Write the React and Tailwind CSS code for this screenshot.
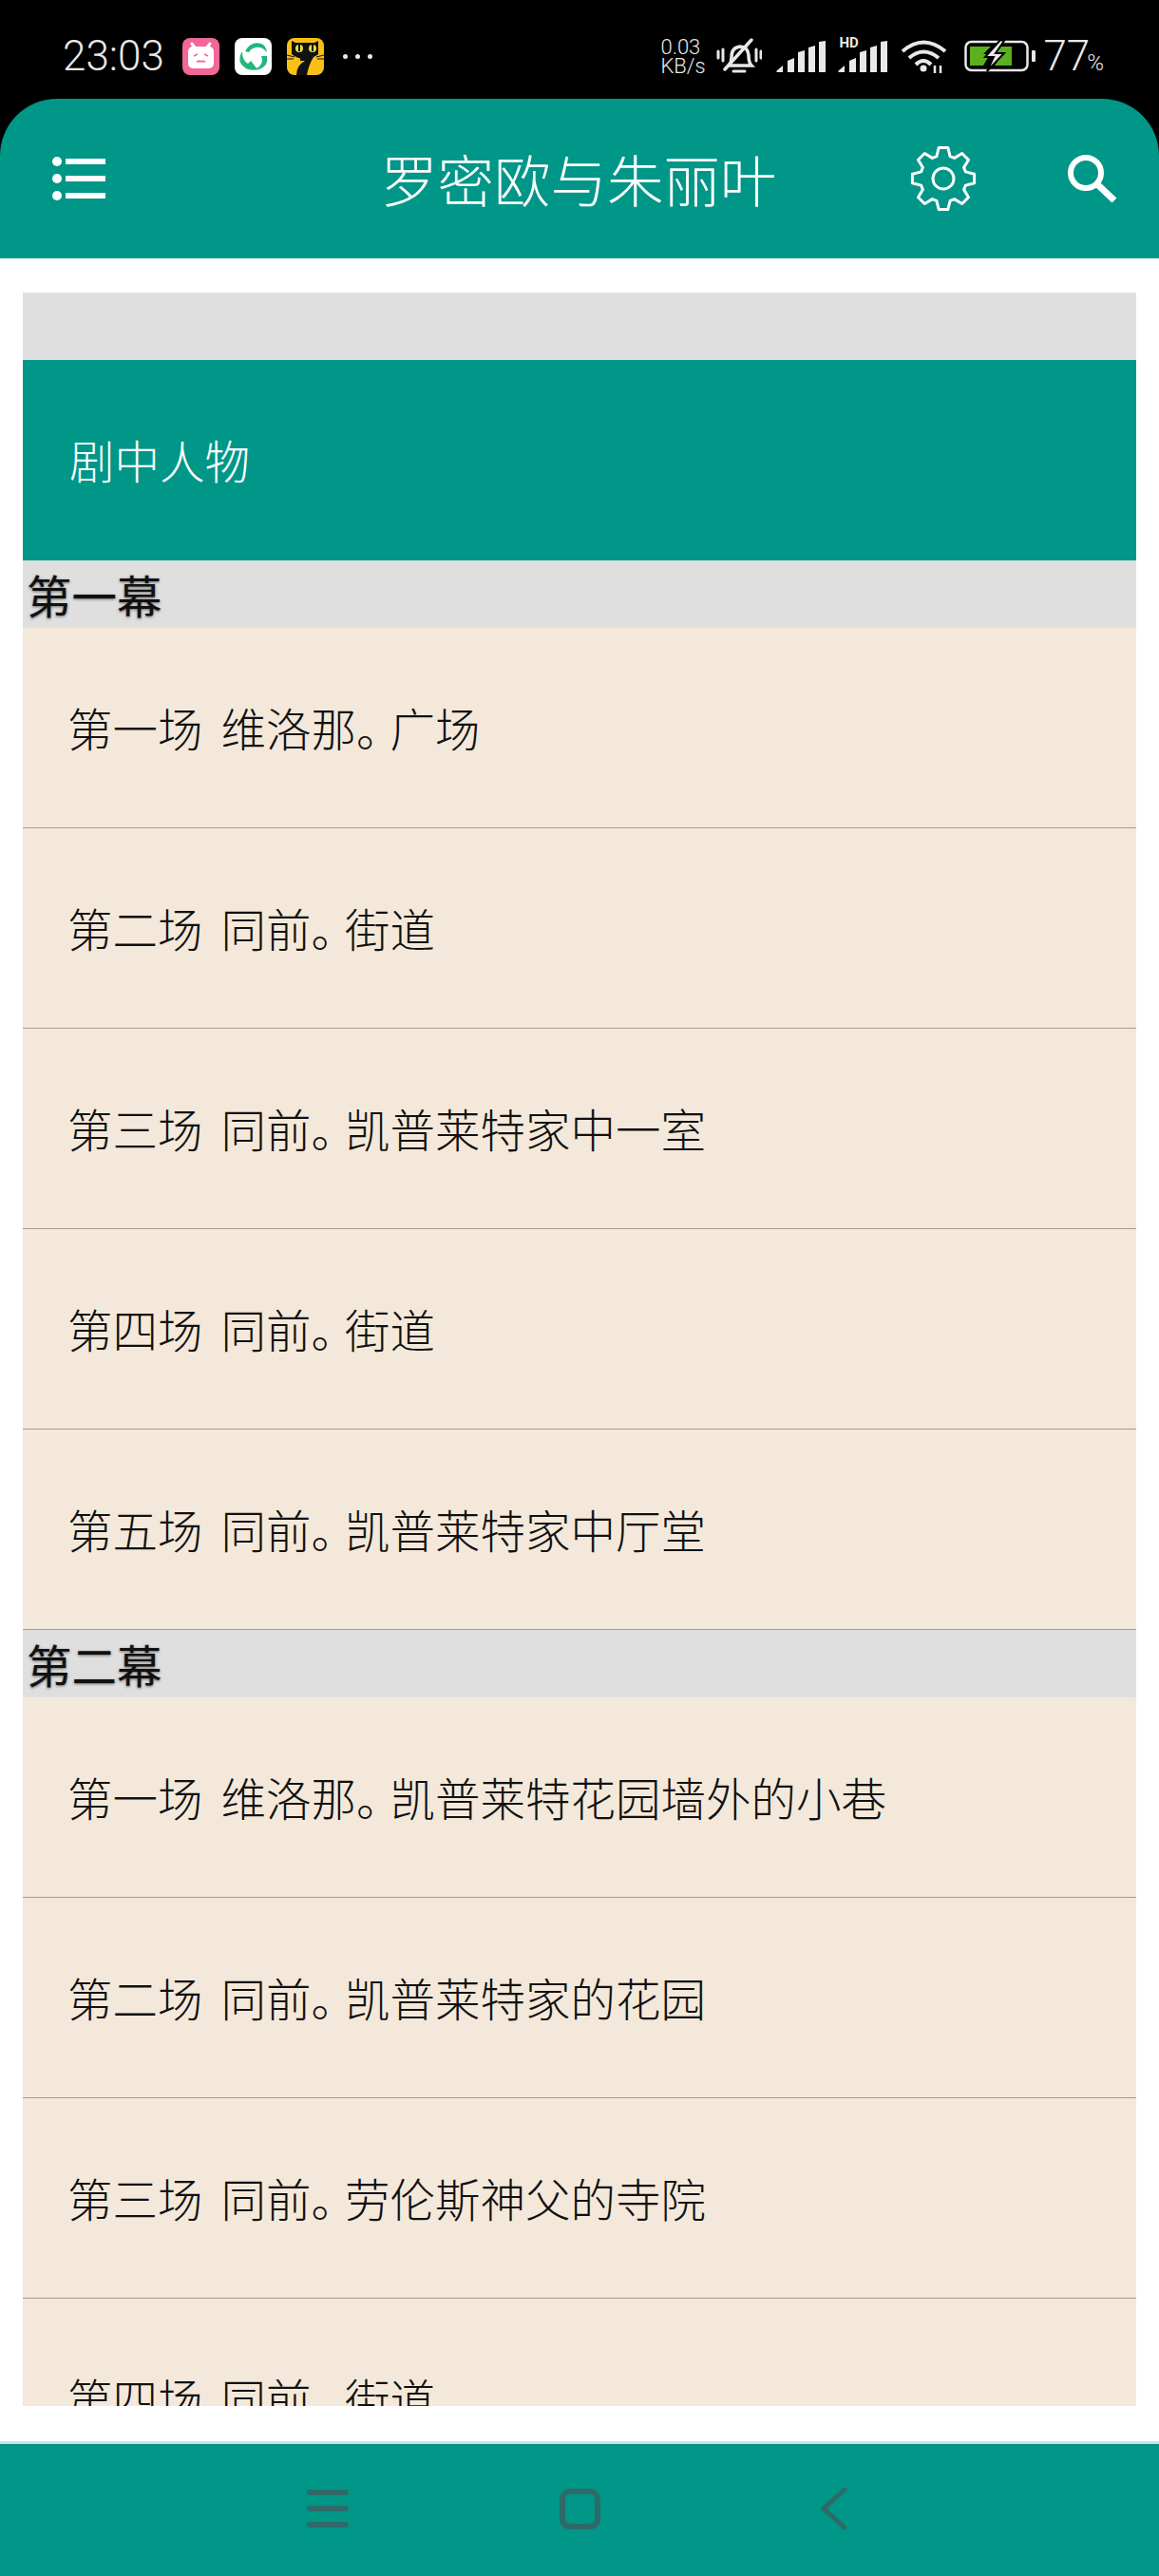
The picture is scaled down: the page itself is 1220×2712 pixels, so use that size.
import React from "react";

const CJK = "font-['Noto_Sans_CJK_SC','Noto_Sans_CJK_JP',sans-serif]";

function gearPath() {
  const cx = 35, cy = 35, ro = 33, ri = 24.5, n = 8;
  const pts = [];
  for (let i = 0; i < n; i++) {
    const a = (i * 2 * Math.PI) / n - Math.PI / 2;
    const w = (2 * Math.PI) / n;
    [[-0.48, ri], [-0.24, ro], [0.24, ro], [0.48, ri]].forEach(([k, r]) => {
      const t = a + k * w * 0.78;
      pts.push(`${(cx + r * Math.cos(t)).toFixed(1)} ${(cy + r * Math.sin(t)).toFixed(1)}`);
    });
  }
  return "M" + pts.join("L") + "Z";
}

const Bili = () => (
  <svg width="39" height="39" viewBox="0 0 39 39">
    <rect width="39" height="39" rx="8" fill="#f0679a" />
    <path d="M13 10l-3-4M26 10l3-4" stroke="#fff" strokeWidth="3" strokeLinecap="round" />
    <rect x="6" y="9" width="27" height="23" rx="5" fill="#fff" />
    <path d="M12 19l4-2M27 19l-4-2M15 24q1.500 2 3 0q1.500 2 3 0q1.500 2 3 0" stroke="#f0679a" strokeWidth="1.500" fill="none" />
  </svg>
);
const Swirl = () => (
  <svg width="39" height="39" viewBox="0 0 39 39">
    <rect width="39" height="39" rx="8" fill="#fff" />
    <path d="M11 14Q17 3 28 6q5 2 6 9q-5-6-12-5q-5 1-7 5z" fill="#1fb87c" />
    <path d="M34 19q2 10-8 14q-4 1-6 0q8-2 9-9q0-3-1-5z" fill="#1fb87c" />
    <path d="M24 33q-12 3-18-7q-2-6 2-12q0 10 6 13l3-3z" fill="#1fb87c" />
  </svg>
);
const Cat = () => (
  <svg width="39" height="39" viewBox="0 0 39 39">
    <rect width="39" height="39" rx="8" fill="#f8bf16" />
    <path d="M5 3l4 2h20l4-2v14q-6 5-14 5T5 17z" fill="#111" />
    <circle cx="13" cy="11" r="4" fill="#e6e04c" />
    <circle cx="27" cy="11" r="4" fill="#e6e04c" />
    <rect x="12" y="7" width="2" height="7" fill="#111" />
    <rect x="26" y="7" width="2" height="7" fill="#111" />
    <path d="M14 20h14q-5 8-7 19H10q0-10 9-15h-5z" fill="#111" />
    <path d="M0 18l8 2M39 18l-8 2M0 22l7 0M39 22l-7 0" stroke="#111" strokeWidth="1" />
  </svg>
);
const Bell = () => (
  <svg width="48" height="40" viewBox="0 0 48 40" fill="none" stroke="#e8e8e8">
    <path d="M13 30q3-3 3-9q0-10 9-11q8 0 9 9q0 8 3 11z" strokeWidth="3.500" />
    <path d="M18 36h12" strokeWidth="3" strokeLinecap="round" />
    <path d="M9 34L37 3" strokeWidth="3.500" strokeLinecap="round" />
    <path d="M7 13v12M2 15v7M42 13v12M47 15v7" strokeWidth="3" strokeLinecap="round" />
  </svg>
);
const Signal = () => (
  <svg width="52" height="34" viewBox="0 0 52 34" fill="#e8e8e8">
    <path d="M0 32l7-6v7H1zM12 21l7-3v15h-7zM23 12l7-2v23h-7zM34 7l7-2v28h-7zM45 1l7-1v33h-7z" />
  </svg>
);
const Wifi = () => (
  <svg width="50" height="37" viewBox="0 0 50 37" fill="none" stroke="#e8e8e8" strokeWidth="4">
    <path d="M2 13Q24-6 47 13" />
    <path d="M9 20Q24 7 40 20" />
    <path d="M16 27Q24 19 32 27" />
    <circle cx="24" cy="31" r="3.500" fill="#e8e8e8" stroke="none" />
    <path d="M36 36v-8M42 36v-8" strokeWidth="2.500" />
  </svg>
);
const Battery = () => (
  <svg width="75" height="34" viewBox="0 0 75 34" fill="none">
    <rect x="1.500" y="2" width="65" height="30" rx="6" stroke="#e8e8e8" strokeWidth="2.500" />
    <rect x="71" y="11" width="4" height="12" rx="1" fill="#e8e8e8" />
    <path d="M6 7h22l-8 8h7L20 27H6zM37 7h13v20H32l6-9h-6z" fill="#59b11f" />
    <path d="M38 0L22 18h9l-7 15 18-19h-9l9-13z" fill="#e8e8e8" stroke="#000" strokeWidth="2" />
  </svg>
);

const Menu = () => (
  <svg width="56" height="47" viewBox="0 0 56 47" fill="#fff">
    <circle cx="5" cy="5" r="5" /><rect x="14" y="2" width="42" height="6" />
    <circle cx="5" cy="23" r="5" /><rect x="14" y="20" width="42" height="6" />
    <circle cx="5" cy="41" r="5" /><rect x="14" y="38" width="42" height="6" />
  </svg>
);
const Gear = () => (
  <svg width="70" height="70" viewBox="0 0 70 70" fill="none" stroke="#fff" strokeWidth="3">
    <path d={gearPath()} strokeLinejoin="round" />
    <circle cx="35" cy="35" r="11" />
  </svg>
);
const Search = () => (
  <svg width="54" height="54" viewBox="0 0 54 54" fill="none" stroke="#fff">
    <circle cx="21" cy="21" r="16" strokeWidth="6" />
    <path d="M33 33l18 17" strokeWidth="7" />
  </svg>
);

const Stop = () => <span className="tracking-[-12px]">。</span>;

const Item = ({ no, head, tail }) => (
  <div className="h-[211px] shrink-0 flex items-center pl-[47px] pb-[1px] border-b border-[#a89c8e] text-[47.500px] font-extralight text-[#111] whitespace-pre">
    <span>{no}</span>
    <span className="ml-[19px]">{head}</span>
    <Stop />
    <span>{tail}</span>
  </div>
);
const Act = ({ children }) => (
  <div className="h-[71px] shrink-0 bg-[#dfdfdf] flex items-center pl-[4px] text-[47.500px] leading-none font-normal text-[#111] [text-shadow:0_1px_3px_rgba(0,0,0,0.55)]">
    {children}
  </div>
);

export default function App() {
  return (
    <div className={`w-[1220px] h-[2712px] bg-black overflow-hidden flex flex-col ${CJK}`}>
      <div className="h-[104px] shrink-0 flex items-center pl-[66px] pr-[58px] pt-[14px] font-['Roboto',sans-serif] text-[#e8e8e8]">
        <span className="text-[44px] font-light w-[126px]">23:03</span>
        <div className="flex gap-[16px]"><Bili /><Swirl /><Cat /></div>
        <div className="flex gap-[8px] ml-[20px]">
          <i className="w-[5px] h-[5px] rounded-full bg-[#e8e8e8]" />
          <i className="w-[5px] h-[5px] rounded-full bg-[#e8e8e8]" />
          <i className="w-[5px] h-[5px] rounded-full bg-[#e8e8e8]" />
        </div>
        <div className="ml-auto flex items-center">
          <div className="w-[59px] text-[22px] leading-[20px] font-light mt-[2px]">0.03<br />KB/s</div>
          <Bell />
          <div className="ml-[15px] mt-[2px]"><Signal /></div>
          <div className="ml-[13px] mt-[2px] relative">
            <span className="absolute left-[1px] top-[-5px] text-[15px] font-bold leading-none">HD</span>
            <Signal />
          </div>
          <div className="ml-[14px]"><Wifi /></div>
          <div className="ml-[17px]"><Battery /></div>
          <span className="text-[44px] font-light ml-[8px]">77</span>
          <span className="text-[24px] font-light mt-[14px] ml-[-3px]">%</span>
        </div>
      </div>

      <div className="h-[168px] shrink-0 bg-[#009688] rounded-t-[60px] flex items-center pl-[55px]">
        <Menu />
        <h1 className="ml-[290px] w-[557px] text-[59.500px] font-extralight text-white whitespace-nowrap leading-none">罗密欧与朱丽叶</h1>
        <Gear />
        <div className="ml-[94px]"><Search /></div>
      </div>

      <div className="flex-1 bg-white pt-[36px] px-[24px] pb-[37px] min-h-0">
        <div className="h-full overflow-hidden flex flex-col">
          <div className="h-[71px] shrink-0 bg-[#dfdfdf]" />
          <div className="h-[211px] shrink-0 bg-[#009688] flex items-center pl-[49px] pb-[2px] text-[47.500px] font-extralight text-white">剧中人物</div>
          <Act>第一幕</Act>
          <div className="bg-[#f4e8da] flex flex-col">
            <Item no="第一场" head="维洛那" tail="广场" />
            <Item no="第二场" head="同前" tail="街道" />
            <Item no="第三场" head="同前" tail="凯普莱特家中一室" />
            <Item no="第四场" head="同前" tail="街道" />
            <Item no="第五场" head="同前" tail="凯普莱特家中厅堂" />
          </div>
          <Act>第二幕</Act>
          <div className="bg-[#f4e8da] flex flex-col">
            <Item no="第一场" head="维洛那" tail="凯普莱特花园墙外的小巷" />
            <Item no="第二场" head="同前" tail="凯普莱特家的花园" />
            <Item no="第三场" head="同前" tail="劳伦斯神父的寺院" />
            <Item no="第四场" head="同前" tail="街道" />
          </div>
        </div>
      </div>

      <div className="h-[142px] shrink-0 bg-[#009688] border-t-[3px] border-[#cfe3ea] flex items-center pl-[323px] pb-[3px]">
        <svg width="44" height="40" viewBox="0 0 44 40" fill="#2f6a6a">
          <rect width="44" height="6" rx="3" y="0" />
          <rect width="44" height="6" rx="3" y="17" />
          <rect width="44" height="6" rx="3" y="34" />
        </svg>
        <svg className="ml-[222px]" width="43" height="43" viewBox="0 0 43 43" fill="none" stroke="#2f6a6a" strokeWidth="6">
          <rect x="3" y="3" width="37" height="37" rx="8" />
        </svg>
        <svg className="ml-[231px]" width="30" height="44" viewBox="0 0 30 44" fill="none" stroke="#2f6a6a" strokeWidth="5" strokeLinecap="round">
          <path d="M26 2L4 22l22 20" />
        </svg>
      </div>
    </div>
  );
}
